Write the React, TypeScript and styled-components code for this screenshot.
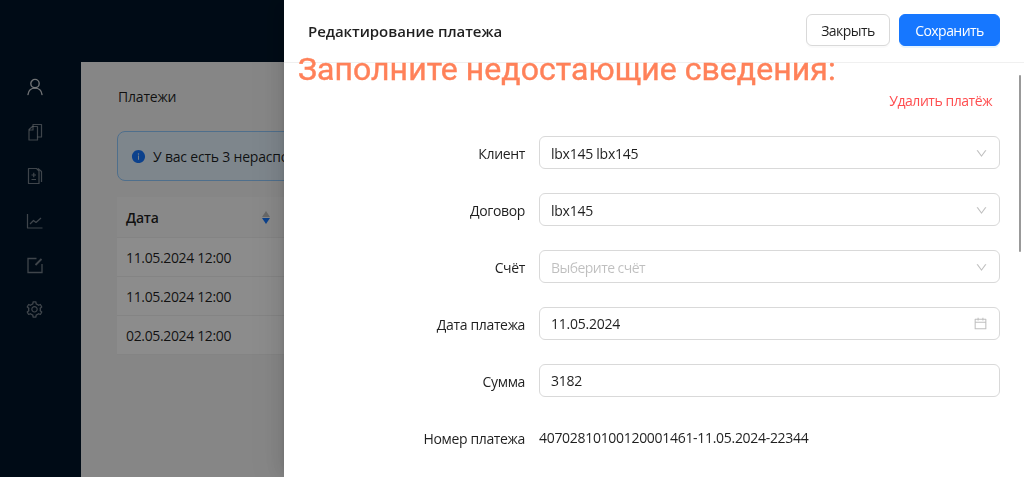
import { createGlobalStyle } from "styled-components";
import styled from "styled-components";
import { AiFillInfoCircle, AiOutlineCalendar, AiOutlineDown, AiOutlineSetting } from "react-icons/ai";

const Global = createGlobalStyle`
  html, body {
    margin: 0;
    height: 100%;
    overflow: hidden;
    font-family: "Open Sans", "Noto Sans", sans-serif;
    font-size: 14px;
    color: rgba(0, 0, 0, 0.88);
  }
  * { box-sizing: border-box; }
`;

const Page = styled.div`
  width: 100%;
  height: 100vh;
  display: flex;
  flex-direction: column;
  background: #f5f5f5;
`;

const TopBar = styled.div`
  height: 62px;
  flex: none;
  background: #001529;
`;

const Main = styled.div`
  flex: 1;
  display: flex;
  min-height: 0;
`;

const Sider = styled.div`
  width: 81px;
  flex: none;
  background: #001529;
  display: flex;
  flex-direction: column;
  align-items: center;
  padding: 13px 12px 0 0;
  gap: 20.6px;
`;

const SiderIcon = styled.div<{ $dim?: boolean }>`
  width: 24px;
  height: 24px;
  display: flex;
  align-items: center;
  justify-content: center;
  color: ${(p) => (p.$dim ? "rgba(255,255,255,0.45)" : "rgba(255,255,255,0.8)")};
`;

const Content = styled.div`
  flex: 1;
  min-width: 0;
  padding: 25px 0 0 36px;
`;

const PageTitle = styled.div`
  font-size: 14px;
  line-height: 20px;
  letter-spacing: -0.2px;
  padding-left: 1px;
  margin-bottom: 24px;
`;

const Alert = styled.div`
  width: 700px;
  height: 50px;
  display: flex;
  align-items: center;
  gap: 7px;
  padding-left: 13px;
  background: #e6f4ff;
  border: 1px solid #91caff;
  border-radius: 8px;
  letter-spacing: -0.2px;
  color: #1677ff;
  white-space: nowrap;
  span { color: rgba(0, 0, 0, 0.88); }
`;

const Table = styled.div`
  width: 700px;
  margin-top: 16px;
  background: #fff;
`;

const HeadRow = styled.div`
  height: 40px;
  display: flex;
  align-items: center;
  justify-content: space-between;
  width: 162px;
  padding: 0 9px;
  font-weight: 600;
  letter-spacing: -0.2px;
`;

const HeadBand = styled.div`
  background: #fafafa;
  border-bottom: 1px solid #f0f0f0;
`;

const BodyRow = styled.div`
  height: 39px;
  display: flex;
  align-items: center;
  padding: 0 9px;
  letter-spacing: -0.35px;
  border-bottom: 1px solid #f0f0f0;
`;

const SortIcon = styled.div`
  display: flex;
  flex-direction: column;
  gap: 1px;
`;

const SortArrow = styled.div<{ $up?: boolean; $active?: boolean }>`
  width: 0;
  height: 0;
  border-left: 4px solid transparent;
  border-right: 4px solid transparent;
  ${(p) => (p.$up ? "border-bottom" : "border-top")}: 6px solid ${(p) => (p.$active ? "#1677ff" : "#bfbfbf")};
`;

const Mask = styled.div`
  position: fixed;
  inset: 0;
  background: rgba(0, 0, 0, 0.45);
`;

const Drawer = styled.div`
  position: fixed;
  top: 0;
  right: 0;
  bottom: 0;
  width: 740px;
  background: #fff;
  display: flex;
  flex-direction: column;
  box-shadow: -6px 0 16px 0 rgba(0, 0, 0, 0.08), -3px 0 6px -4px rgba(0, 0, 0, 0.12), -9px 0 28px 8px rgba(0, 0, 0, 0.05);
`;

const DrawerHead = styled.div`
  height: 63px;
  flex: none;
  display: flex;
  align-items: flex-start;
  justify-content: space-between;
  padding: 14px 24px 0 24px;
  border-bottom: 1px solid #f0f0f0;
`;

const DrawerTitle = styled.div`
  font-size: 15px;
  line-height: 35px;
  font-weight: 600;
  letter-spacing: -0.06px;
`;

const Actions = styled.div`
  display: flex;
  gap: 9px;
`;

const Button = styled.button<{ $primary?: boolean }>`
  height: 32px;
  width: ${(p) => (p.$primary ? "101px" : "84px")};
  padding: 0;
  border-radius: 6px;
  font: inherit;
  letter-spacing: -0.55px;
  border: 1px solid ${(p) => (p.$primary ? "#1677ff" : "#d9d9d9")};
  background: ${(p) => (p.$primary ? "#1677ff" : "#fff")};
  color: ${(p) => (p.$primary ? "#fff" : "rgba(0,0,0,0.88)")};
  box-shadow: 0 2px 0 ${(p) => (p.$primary ? "rgba(5,145,255,0.1)" : "rgba(0,0,0,0.02)")};
`;

const DrawerBody = styled.div`
  flex: 1;
  position: relative;
  min-height: 0;
  overflow: hidden;
  padding: 28px 24px 0 0;
`;

const Promo = styled.div`
  position: fixed;
  left: 298px;
  top: 47px;
  font-family: Roboto, "Noto Sans", sans-serif;
  font-weight: 400;
  font-size: 32px;
  letter-spacing: 0.05px;
  -webkit-text-stroke: 0.4px #ff8159;
  line-height: 44px;
  color: #ff8159;
  white-space: nowrap;
`;

const Thumb = styled.div`
  position: absolute;
  right: 3px;
  top: 12px;
  width: 2px;
  height: 177px;
  background: #999;
  border-radius: 1px;
`;

const DeleteRow = styled.div`
  display: flex;
  justify-content: flex-end;
  padding-right: 8px;
  height: 20px;
  line-height: 20px;
  margin-bottom: 25px;
  color: #ff4d4f;
  letter-spacing: -0.45px;
`;

const FormGrid = styled.div`
  display: grid;
  grid-template-columns: 241px 461px;
  column-gap: 14px;
  row-gap: 24px;
  align-items: center;
`;

const Label = styled.div`
  text-align: right;
  letter-spacing: -0.35px;
  padding-top: 2px;
  color: rgba(0, 0, 0, 0.88);
`;

const Field = styled.div<{ $placeholder?: boolean; $numeric?: boolean }>`
  height: 33px;
  display: flex;
  align-items: center;
  justify-content: space-between;
  padding: ${(p) => (p.$numeric ? "0 11px" : "1px 11px 0")};
  border: 1px solid #d9d9d9;
  border-radius: 6px;
  letter-spacing: ${(p) => (p.$placeholder ? "-0.55px" : "-0.25px")};
  color: ${(p) => (p.$placeholder ? "rgba(0,0,0,0.25)" : "rgba(0,0,0,0.88)")};
  svg { color: rgba(0, 0, 0, 0.25); flex: none; }
`;

const Plain = styled.div`
  letter-spacing: -0.3px;
  height: 33px;
  line-height: 33px;
`;

function UserIcon() {
  return (
    <svg width="18" height="18" viewBox="0 0 18 18" fill="none" stroke="currentColor" strokeWidth="1.4" strokeLinecap="round">
      <circle cx="9" cy="5.6" r="4.2" />
      <path d="M2 16.5c.4-3.8 3.2-6.4 7-6.4s6.600 2.600 7 6.400" />
    </svg>
  );
}

function CopyIcon() {
  return (
    <svg width="18" height="18" viewBox="0 0 18 18" fill="none" stroke="currentColor" strokeWidth="1.2" strokeLinejoin="round">
      <path d="M3 6.500 6.500 3.500H11.500V17H3Z" />
      <path d="M7 3.500V1.500H15.500V14H11.500" />
      <path d="M3 7H7V3.500" />
    </svg>
  );
}

function ReportIcon() {
  return (
    <svg width="18" height="18" viewBox="0 0 18 18" fill="none" stroke="currentColor" strokeWidth="1.2" strokeLinejoin="round">
      <path d="M2.500 1.500H10.500L13 4V16.500H2.500Z" />
      <path d="M12 1.500 15.500 4.500V15" />
      <path d="M5.500 8H10M7.750 5.800V10.200M5.500 12.500H10" />
    </svg>
  );
}

function ChartIcon() {
  return (
    <svg width="18" height="18" viewBox="0 0 18 18" fill="none" stroke="currentColor" strokeWidth="1.2" strokeLinejoin="round">
      <path d="M1.500 2V16H16.500" />
      <path d="M4 12 7.500 8.500 10 10.500 15 6" />
    </svg>
  );
}

function SignIcon() {
  return (
    <svg width="18" height="18" viewBox="0 0 18 18" fill="none" stroke="currentColor" strokeWidth="1.300">
      <path d="M10.500 2.500H2V16.500H16V8" />
      <path d="M15.500 3 9.500 9" strokeWidth="1.800" />
    </svg>
  );
}

export default function App() {
  return (
    <>
      <Global />
      <Page>
        <TopBar />
        <Main>
          <Sider>
            <SiderIcon><UserIcon /></SiderIcon>
            <SiderIcon $dim><CopyIcon /></SiderIcon>
            <SiderIcon $dim><ReportIcon /></SiderIcon>
            <SiderIcon $dim><ChartIcon /></SiderIcon>
            <SiderIcon $dim><SignIcon /></SiderIcon>
            <SiderIcon $dim><AiOutlineSetting size={19} /></SiderIcon>
          </Sider>
          <Content>
            <PageTitle>Платежи</PageTitle>
            <Alert>
              <AiFillInfoCircle size={15} />
              <span>У вас есть 3 нераспознанных платежа</span>
            </Alert>
            <Table>
              <HeadBand>
                <HeadRow>
                  Дата
                  <SortIcon>
                    <SortArrow $up />
                    <SortArrow $active />
                  </SortIcon>
                </HeadRow>
              </HeadBand>
              <BodyRow>11.05.2024 12:00</BodyRow>
              <BodyRow>11.05.2024 12:00</BodyRow>
              <BodyRow>02.05.2024 12:00</BodyRow>
            </Table>
          </Content>
        </Main>
      </Page>
      <Mask />
      <Drawer>
        <DrawerHead>
          <DrawerTitle>Редактирование платежа</DrawerTitle>
          <Actions>
            <Button>Закрыть</Button>
            <Button $primary>Сохранить</Button>
          </Actions>
        </DrawerHead>
        <DrawerBody>
          <Thumb />
          <DeleteRow>Удалить платёж</DeleteRow>
          <FormGrid>
            <Label>Клиент</Label>
            <Field>lbx145 lbx145<AiOutlineDown size={13} /></Field>
            <Label>Договор</Label>
            <Field>lbx145<AiOutlineDown size={13} /></Field>
            <Label>Счёт</Label>
            <Field $placeholder>Выберите счёт<AiOutlineDown size={13} /></Field>
            <Label>Дата платежа</Label>
            <Field $numeric>11.05.2024<AiOutlineCalendar size={15} /></Field>
            <Label>Сумма</Label>
            <Field $numeric>3182</Field>
            <Label>Номер платежа</Label>
            <Plain>40702810100120001461-11.05.2024-22344</Plain>
          </FormGrid>
        </DrawerBody>
      </Drawer>
      <Promo>Заполните недостающие сведения:</Promo>
    </>
  );
}
